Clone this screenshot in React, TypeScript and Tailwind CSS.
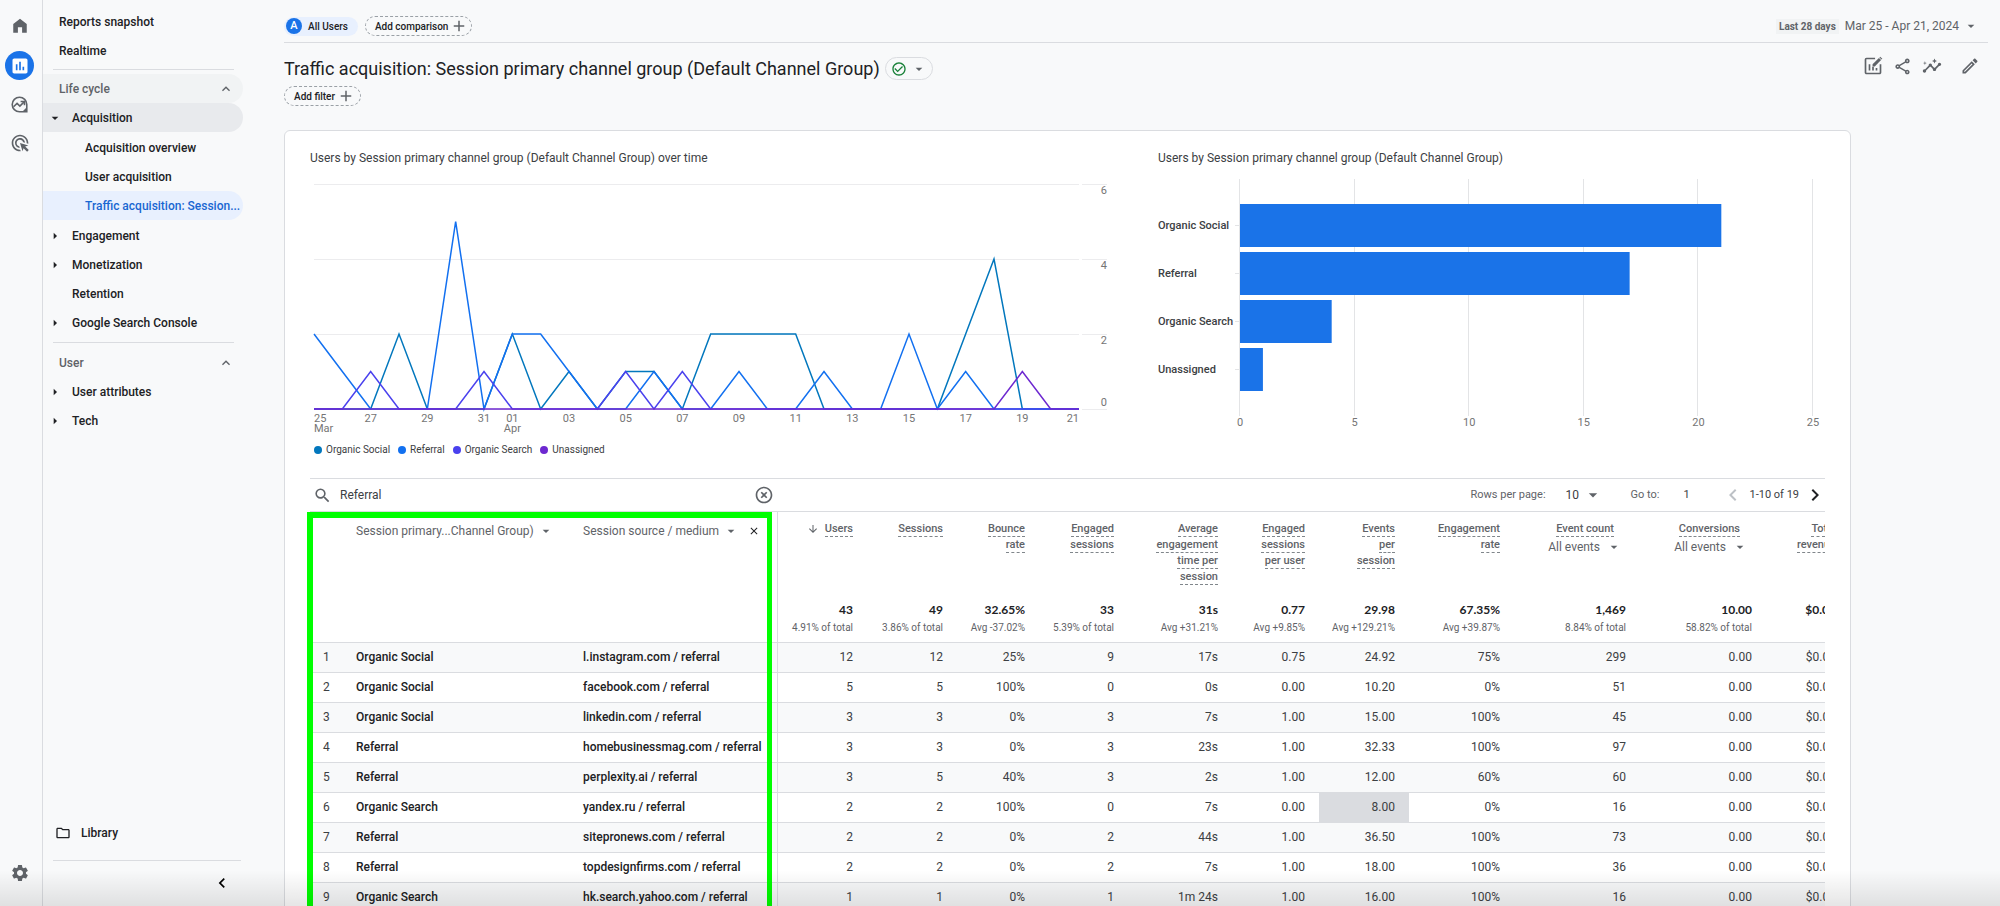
import React, { useState } from "react";
import {
  MdAdd,
  MdAdsClick,
  MdArrowDownward,
  MdArrowDropDown,
  MdArrowRight,
  MdCheckCircleOutline,
  MdChevronLeft,
  MdChevronRight,
  MdClose,
  MdExpandLess,
  MdHighlightOff,
  MdInsertChart,
  MdInsights,
  MdOutlineEdit,
  MdOutlineFolder,
  MdOutlineShare,
  MdSearch,
  MdSettings,
} from "react-icons/md";

// ---------- data ----------

const SERIES = [
  { name: "Organic Social", color: "#0277bd", points: [0, 0, 0, 2, 0, 0, 0, 2, 0, 1, 0, 1, 1, 0, 2, 2, 2, 2, 0, 0, 0, 0, 0, 2, 4, 0, 0, 0] },
  { name: "Referral", color: "#1270f0", points: [2, 1, 0, 0, 0, 5, 0, 2, 2, 1, 0, 0, 1, 0, 0, 1, 0, 0, 1, 0, 0, 2, 0, 1, 0, 0, 0, 0] },
  { name: "Organic Search", color: "#4a41ee", points: [0, 0, 1, 0, 0, 0, 1, 0, 0, 0, 0, 1, 0, 1, 0, 0, 0, 0, 0, 0, 0, 0, 0, 0, 0, 0, 0, 0] },
  { name: "Unassigned", color: "#6d28d0", points: [0, 0, 0, 0, 0, 0, 0, 0, 0, 0, 0, 0, 0, 0, 0, 0, 0, 0, 0, 0, 0, 0, 0, 0, 0, 1, 0, 0] },
];

const DAY_TICKS = [
  { day: 0, label: "25", month: "Mar" },
  { day: 2, label: "27" },
  { day: 4, label: "29" },
  { day: 6, label: "31" },
  { day: 7, label: "01", month: "Apr" },
  { day: 9, label: "03" },
  { day: 11, label: "05" },
  { day: 13, label: "07" },
  { day: 15, label: "09" },
  { day: 17, label: "11" },
  { day: 19, label: "13" },
  { day: 21, label: "15" },
  { day: 23, label: "17" },
  { day: 25, label: "19" },
  { day: 27, label: "21" },
];

const CHANNELS = [
  { name: "Organic Social", users: 21 },
  { name: "Referral", users: 17 },
  { name: "Organic Search", users: 4 },
  { name: "Unassigned", users: 1 },
];

const METRICS = [
  { lines: ["Users"], total: "43", note: "4.91% of total", sorted: true },
  { lines: ["Sessions"], total: "49", note: "3.86% of total" },
  { lines: ["Bounce", "rate"], total: "32.65%", note: "Avg -37.02%" },
  { lines: ["Engaged", "sessions"], total: "33", note: "5.39% of total" },
  { lines: ["Average", "engagement", "time per", "session"], total: "31s", note: "Avg +31.21%" },
  { lines: ["Engaged", "sessions", "per user"], total: "0.77", note: "Avg +9.85%" },
  { lines: ["Events", "per", "session"], total: "29.98", note: "Avg +129.21%" },
  { lines: ["Engagement", "rate"], total: "67.35%", note: "Avg +39.87%" },
  { lines: ["Event count"], total: "1,469", note: "8.84% of total", filter: true },
  { lines: ["Conversions"], total: "10.00", note: "58.82% of total", filter: true },
  { lines: ["Total", "revenue"], total: "$0.00", note: "" },
];

const ROWS = [
  ["Organic Social", "l.instagram.com / referral", "12", "12", "25%", "9", "17s", "0.75", "24.92", "75%", "299", "0.00", "$0.00"],
  ["Organic Social", "facebook.com / referral", "5", "5", "100%", "0", "0s", "0.00", "10.20", "0%", "51", "0.00", "$0.00"],
  ["Organic Social", "linkedin.com / referral", "3", "3", "0%", "3", "7s", "1.00", "15.00", "100%", "45", "0.00", "$0.00"],
  ["Referral", "homebusinessmag.com / referral", "3", "3", "0%", "3", "23s", "1.00", "32.33", "100%", "97", "0.00", "$0.00"],
  ["Referral", "perplexity.ai / referral", "3", "5", "40%", "3", "2s", "1.00", "12.00", "60%", "60", "0.00", "$0.00"],
  ["Organic Search", "yandex.ru / referral", "2", "2", "100%", "0", "7s", "0.00", "8.00", "0%", "16", "0.00", "$0.00"],
  ["Referral", "sitepronews.com / referral", "2", "2", "0%", "2", "44s", "1.00", "36.50", "100%", "73", "0.00", "$0.00"],
  ["Referral", "topdesignfirms.com / referral", "2", "2", "0%", "2", "7s", "1.00", "18.00", "100%", "36", "0.00", "$0.00"],
  ["Organic Search", "hk.search.yahoo.com / referral", "1", "1", "0%", "1", "1m 24s", "1.00", "16.00", "100%", "16", "0.00", "$0.00"],
];

// ---------- icons ----------

const HomeIcon = () => (
  <svg viewBox="0 0 24 24" className="size-[18px]" fill="currentColor">
    <path d="M3 21V9.2L12 2.4l9 6.8V21h-6.2v-7.4H9.2V21z" />
  </svg>
);

const ExploreIcon = () => (
  <svg viewBox="0 0 24 24" className="size-[19px]" fill="none" stroke="currentColor" strokeWidth="2">
    <path d="M12 2.8a9.2 9.2 0 1 0 0 18.4h9.2V12A9.2 9.2 0 0 0 12 2.8z" />
    <path d="M21.2 15.5l-5.7 5.7h5.7z" fill="currentColor" stroke="none" />
    <path d="M4.5 14.8l4.4-4.3 3.6 3.5 5-5" />
    <path d="M13.4 8.2h4.9v4.9" />
  </svg>
);

const CustomizeIcon = () => (
  <svg viewBox="0 0 24 24" className="size-5" fill="none" stroke="currentColor" strokeWidth="2">
    <path d="M14.5 3H4.2A1.2 1.2 0 0 0 3 4.2v15.6A1.2 1.2 0 0 0 4.2 21h15.6a1.2 1.2 0 0 0 1.2-1.2V10" />
    <path d="M7.8 10v7.5M12 13v4.500M16.200 14.500v3" />
    <path d="M11.500 12.500v-2.600l7.600-7.600 2.600 2.600-7.600 7.600z" fill="currentColor" stroke="none" />
    <path d="M19.700 1.700l.9-.9 2.600 2.600-.9.9z" fill="currentColor" stroke="none" />
  </svg>
);

// ---------- navigation ----------

const Rail = () => (
  <nav aria-label="Sections" className="flex w-[43px] shrink-0 flex-col items-center border-r border-[#dadce0] pt-[17px] pr-[3px] pb-[23px] text-[#5f6368]">
    <button aria-label="Home"><HomeIcon /></button>
    <button aria-label="Reports" className="mt-4 flex size-[29px] items-center justify-center rounded-full bg-[#1a73e8] text-white">
      <MdInsertChart className="size-[20px]" />
    </button>
    <button aria-label="Explore" className="mt-[15px]"><ExploreIcon /></button>
    <button aria-label="Advertising" className="mt-[19px]"><MdAdsClick className="size-[20px]" /></button>
    <button aria-label="Admin" className="mt-auto"><MdSettings className="size-5" /></button>
  </nav>
);

interface NavItemProps {
  label: string;
  arrow?: "right" | "down";
  sub?: boolean;
}

const NavItem = ({ label, arrow, sub }: NavItemProps) => {
  const active = label.startsWith("Traffic");
  return (
    <a
      href="#"
      className={`flex h-[29px] w-[200px] items-center rounded-r-full ${arrow === "down" ? "bg-[#e8eaed]" : ""} ${
        active ? "bg-[#e8f0fe] text-[#1967d2]" : "text-[#202124]"
      }`}
    >
      <span className={sub ? "w-[42px] shrink-0" : "w-[29px] shrink-0"}>
        {arrow === "right" && <MdArrowRight className="ml-1 size-4" />}
        {arrow === "down" && <MdArrowDropDown className="ml-1 size-4" />}
      </span>
      <span className="whitespace-nowrap">{label}</span>
    </a>
  );
};

const NavGroup = ({ label, hovered }: { label: string; hovered?: boolean }) => (
  <button className={`flex h-[29px] w-[200px] items-center justify-between rounded-r-full pr-[9px] pl-4 text-[#5f6368] ${hovered ? "bg-[#f1f3f4]" : ""}`}>
    {label}
    <MdExpandLess className="size-4" />
  </button>
);

const Sidebar = () => (
  <nav aria-label="Reports" className="flex w-[241px] shrink-0 flex-col pt-[7px] text-xs font-medium">
    <a href="#" className="flex h-[29px] items-center pl-4 text-[#202124]">Reports snapshot</a>
    <a href="#" className="flex h-[29px] items-center pl-4 text-[#202124]">Realtime</a>
    <hr className="mx-[10px] my-1 w-[181px] border-[#dadce0]" />
    <NavGroup label="Life cycle" hovered />
    <NavItem label="Acquisition" arrow="down" />
    <div className="my-px">
      <NavItem label="Acquisition overview" sub />
      <NavItem label="User acquisition" sub />
      <NavItem label="Traffic acquisition: Session..." sub />
    </div>
    <NavItem label="Engagement" arrow="right" />
    <NavItem label="Monetization" arrow="right" />
    <NavItem label="Retention" />
    <NavItem label="Google Search Console" arrow="right" />
    <hr className="mx-[10px] my-[5px] w-[181px] border-[#dadce0]" />
    <NavGroup label="User" />
    <NavItem label="User attributes" arrow="right" />
    <NavItem label="Tech" arrow="right" />

    <a href="#" className="mt-auto flex items-center gap-[10px] pl-3 text-[#202124]">
      <MdOutlineFolder className="size-4" />
      Library
    </a>
    <hr className="mx-[10px] mt-[19px] w-[188px] border-[#dadce0]" />
    <button aria-label="Collapse navigation" className="mt-3 mb-[13px] ml-[169px] w-fit text-black">
      <MdChevronLeft className="size-5" />
    </button>
  </nav>
);

// ---------- charts ----------

const LineChart = () => {
  const x = (day: number) => 4 + (day * 765) / 27;
  const y = (v: number) => 239 - v * 37.5;
  return (
    <svg viewBox="0 0 800 272" className="w-full" role="img" aria-label="Users over time" fontFamily="Roboto, sans-serif" fontSize="11">
      {[6, 4, 2, 0].map((v) => (
        <g key={v}>
          <path d={`M4 ${Math.floor(y(v)) + 0.5}H769M772 ${Math.floor(y(v)) + 0.5}H797`} stroke="#ececee" />
          <text x="797" y={v === 0 ? 236 : y(v) + 10} textAnchor="end" fill="#757575">{v}</text>
        </g>
      ))}
      {DAY_TICKS.map((t) => {
        const anchor = t.day === 0 ? "start" : t.day === 27 ? "end" : "middle";
        return (
          <g key={t.label} textAnchor={anchor} fill="#757575">
            <text x={x(t.day)} y="252">{t.label}</text>
            {t.month && <text x={x(t.day)} y="262">{t.month}</text>}
          </g>
        );
      })}
      {SERIES.map((s) => (
        <polyline
          key={s.name}
          points={s.points.map((v, i) => `${x(i)},${y(v)}`).join(" ")}
          fill="none"
          stroke={s.color}
          strokeWidth="1.5"
        />
      ))}
    </svg>
  );
};

const BarChart = () => {
  const x = (v: number) => 82 + v * 22.92;
  return (
    <svg viewBox="0 0 667 260" className="w-full" role="img" aria-label="Users by channel" fontFamily="Roboto, sans-serif" fontSize="11">
      {[0, 5, 10, 15, 20, 25].map((v) => (
        <g key={v}>
          <path d={`M${Math.round(x(v)) - 0.5} 9V246`} stroke="#e3e4e6" />
          <text x={x(v)} y="256" textAnchor="middle" fill="#757575">{v}</text>
        </g>
      ))}
      {CHANNELS.map((c, i) => (
        <g key={c.name}>
          <path d={`M77 ${55.5 + i * 48}H82`} stroke="#e3e4e6" />
          <rect x="82" y={34 + i * 48} width={x(c.users) - 82} height="43" fill="#1a73e8" />
          <text x="0" y={59 + i * 48} fill="#3c4043" fontWeight="500">{c.name}</text>
        </g>
      ))}
    </svg>
  );
};

// ---------- table ----------

const TableToolbar = () => {
  const [query, setQuery] = useState("Referral");
  return (
    <div className="flex h-[34px] items-center border-t border-b border-[#dadce0] text-[11px] text-[#3c4043]">
      <label htmlFor="search" className="pl-[3px] text-[#5f6368]" aria-label="Search">
        <MdSearch className="size-[19px]" />
      </label>
      <input
        id="search"
        value={query}
        onChange={(e) => setQuery(e.target.value)}
        className="ml-2 w-[414px] bg-transparent text-xs outline-none"
      />
      <button aria-label="Clear search" onClick={() => setQuery("")} className="text-[#5f6368]">
        <MdHighlightOff className="size-5" />
      </button>
      <label htmlFor="rows" className="ml-auto text-[#5f6368]">Rows per page:</label>
      <div className="ml-5 flex items-center text-xs">
        <select id="rows" defaultValue="10" className="w-[17px] appearance-none">
          <option>10</option>
        </select>
        <MdArrowDropDown className="size-5 text-[#5f6368]" />
      </div>
      <label htmlFor="goto" className="ml-7 text-[#5f6368]">Go to:</label>
      <input id="goto" defaultValue="1" className="ml-6 w-[38px] bg-transparent outline-none" />
      <button aria-label="Previous page" className="text-[#bdc1c6]"><MdChevronLeft className="size-6" /></button>
      <span className="ml-1">1-10 of 19</span>
      <button aria-label="Next page" className="-mr-[2px] ml-1 text-[#202124]"><MdChevronRight className="size-6" /></button>
    </div>
  );
};

const DimensionHeader = ({ label, removable }: { label: string; removable?: boolean }) => (
  <th className="px-0 pt-[11px] text-left align-top font-normal">
    <div className="flex items-center">
      <button className="flex items-center gap-1 whitespace-nowrap">
        {label}
        <MdArrowDropDown className="size-4" />
      </button>
      {removable && (
        <button aria-label="Remove dimension" className="ml-[9px] text-[#202124]">
          <MdClose className="size-3" />
        </button>
      )}
    </div>
  </th>
);

const AcquisitionTable = () => (
  <div className="overflow-hidden">
    <table className="w-[1540px] table-fixed border-collapse text-xs text-[#3c4043]">
      <colgroup>
        <col className="w-[46px]" />
        <col className="w-[227px]" />
        <col className="w-[194px]" />
        <col className="w-[90px]" />
        <col className="w-[90px]" />
        <col className="w-[82px]" />
        <col className="w-[89px]" />
        <col className="w-[104px]" />
        <col className="w-[87px]" />
        <col className="w-[90px]" />
        <col className="w-[105px]" />
        <col className="w-[126px]" />
        <col className="w-[126px]" />
        <col className="w-[84px]" />
      </colgroup>
      <thead>
        <tr className="h-[130px] text-[#5f6368]">
          <th />
          <DimensionHeader label="Session primary...Channel Group)" />
          <DimensionHeader label="Session source / medium" removable />
          {METRICS.map((m) => (
            <th key={m.lines.join()} className="border-[#dadce0] p-0 pt-[9px] pr-[14px] text-right align-top font-medium nth-[4]:border-l">
              <div className={`flex h-[81px] flex-col items-end text-[11px] ${m.filter ? "pr-3" : ""}`}>
                {m.lines.map((line, i) => (
                  <span key={line} className="flex h-4 items-center gap-[6px] leading-4">
                    {m.sorted && i === 0 && <MdArrowDownward className="size-3" />}
                    <span className="h-4 border-b border-dashed border-[#80868b]">{line}</span>
                  </span>
                ))}
                {m.filter && (
                  <button className="-mr-2 mt-[2px] flex items-center gap-[6px] text-xs font-normal leading-4 whitespace-nowrap">
                    All events
                    <MdArrowDropDown className="size-4" />
                  </button>
                )}
              </div>
              <div className="font-[Lato,sans-serif] leading-4 font-bold text-[#202124]">{m.total}</div>
              <div className="mt-[2px] h-4 text-[10px] leading-4 font-normal whitespace-nowrap">{m.note}</div>
            </th>
          ))}
        </tr>
      </thead>
      <tbody>
        {ROWS.map((row, r) => (
          <tr key={row[1]} className="h-[30px] border-t border-[#dadce0] odd:bg-[#f8f9fa]">
            <td className="pl-[13px]">{r + 1}</td>
            {row.map((cell, c) =>
              c < 2 ? (
                <td key={c} className="font-medium whitespace-nowrap text-[#202124]">{cell}</td>
              ) : (
                <td
                  key={c}
                  className={`pr-[14px] text-right ${c === 2 ? "border-l border-[#dadce0]" : ""} ${r === 5 && c === 8 ? "bg-[#dadce0]" : ""}`}
                >
                  {cell}
                </td>
              )
            )}
          </tr>
        ))}
      </tbody>
    </table>
  </div>
);

// ---------- page ----------

export default function App() {
  return (
    <div className="relative flex h-screen overflow-hidden bg-[#f8f9fa] font-[Roboto,sans-serif] text-[#202124]">
      <Rail />
      <Sidebar />

      <main className="min-w-0 flex-1 pr-3">
        <div className="flex h-[43px] items-center border-b border-[#dadce0] pt-[10px] text-[10px] font-medium">
          <button className="flex h-[19px] items-center gap-[6px] rounded-full bg-[#e8f0fe] pr-[10px] pl-[2px]">
            <span className="flex size-4 items-center justify-center rounded-full bg-[#1a73e8] text-[11px] text-white">A</span>
            All Users
          </button>
          <button className="ml-[7px] flex h-5 items-center gap-[2px] rounded-full border border-dashed border-[#9aa0a6] pr-[3px] pl-[9px]">
            Add comparison
            <MdAdd className="size-[18px] text-[#5f6368]" />
          </button>
          <button className="ml-auto flex items-center text-[#5f6368]">
            <span className="bg-[#f1f3f4] px-[3px] font-bold">Last 28 days</span>
            <span className="ml-[6px] text-xs font-normal">Mar 25 - Apr 21, 2024</span>
            <MdArrowDropDown className="mr-[9px] ml-1 size-4" />
          </button>
        </div>

        <div className="flex items-start justify-between">
          <div>
            <div className="mt-[14px] flex h-[23px] items-center gap-[5px]">
              <h1 className="text-lg leading-5 whitespace-nowrap">
                Traffic acquisition: Session primary channel group (Default Channel Group)
              </h1>
              <button aria-label="Report status" className="flex h-[23px] items-center gap-1 rounded-full border border-[#dadce0] pr-[5px] pl-[5px]">
                <MdCheckCircleOutline className="size-4 text-[#188038]" />
                <MdArrowDropDown className="size-4 text-[#5f6368]" />
              </button>
            </div>
            <button className="mt-[6px] flex h-5 items-center gap-[2px] rounded-full border border-dashed border-[#9aa0a6] pr-[5px] pl-[9px] text-[10px] font-medium">
              Add filter
              <MdAdd className="size-[18px] text-[#5f6368]" />
            </button>
          </div>
          <div className="mt-[13px] mr-[8px] flex items-center gap-[10px] text-[#5f6368]">
            <button aria-label="Customize report"><CustomizeIcon /></button>
            <button aria-label="Share"><MdOutlineShare className="size-[19px]" /></button>
            <button aria-label="Insights"><MdInsights className="size-5" /></button>
            <button aria-label="Edit" className="ml-2"><MdOutlineEdit className="size-5" /></button>
          </div>
        </div>

        <section className="mt-6 max-w-[1567px] rounded-md border border-[#dadce0] bg-white px-[25px] pt-[17px]">
          <div className="flex justify-between gap-12">
            <div className="min-w-0 flex-[800]">
              <h2 className="mb-[2px] text-xs leading-5 text-[#3c4043]">
                Users by Session primary channel group (Default Channel Group) over time
              </h2>
              <LineChart />
              <ul className="ml-1 flex gap-2 text-[10px] leading-4 text-[#3c4043]">
                {SERIES.map((s) => (
                  <li key={s.name} className="flex items-center gap-1">
                    <span className="size-2 rounded-full" style={{ backgroundColor: s.color }} />
                    {s.name}
                  </li>
                ))}
              </ul>
            </div>
            <div className="min-w-0 flex-[667]">
              <h2 className="mb-[2px] text-xs leading-5 text-[#3c4043]">
                Users by Session primary channel group (Default Channel Group)
              </h2>
              <BarChart />
            </div>
          </div>

          <div className="relative mt-5">
            <TableToolbar />
            <AcquisitionTable />
            {/* highlight around the two dimension columns */}
            <div className="pointer-events-none absolute top-[34px] -bottom-2 -left-[3px] w-[465px] border-[6px] border-r-[5px] border-[#00ff00]" />
          </div>
        </section>
      </main>

      <div className="pointer-events-none absolute inset-x-0 bottom-0 h-9 bg-linear-to-t from-black/10 to-transparent" />
    </div>
  );
}
